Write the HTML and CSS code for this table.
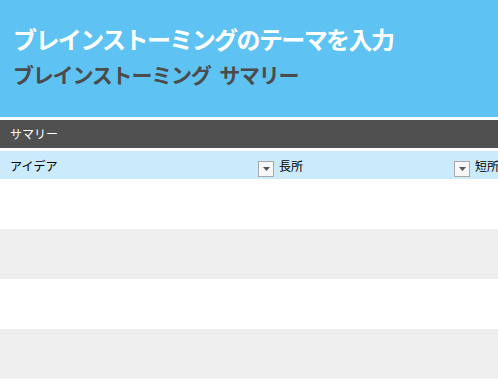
FILE: index.html
```html
<!DOCTYPE html>
<html lang="ja">
<head>
<meta charset="utf-8">
<title>ブレインストーミング サマリー</title>
<link rel="stylesheet" href="styles.css">
</head>
<body>
<header class="banner">
  <h1 class="title">ブレインストーミングのテーマを入力</h1>
  <h2 class="subtitle">ブレインストーミング サマリー</h2>
</header>
<div class="section-bar">サマリー</div>
<div class="table">
  <div class="thead">
    <div class="th"><span>アイデア</span><span class="dd"><svg width="7" height="4" viewBox="0 0 7 4"><path d="M0 0H7L3.5 4Z" fill="#555"/></svg></span></div>
    <div class="th"><span>長所</span><span class="dd"><svg width="7" height="4" viewBox="0 0 7 4"><path d="M0 0H7L3.5 4Z" fill="#555"/></svg></span></div>
    <div class="th"><span>短所</span></div>
  </div>
  <div class="row"></div>
  <div class="row alt"></div>
  <div class="row"></div>
  <div class="row alt"></div>
</div>
</body>
</html>
```
FILE: styles.css
```css
html, body {
  margin: 0;
  padding: 0;
  background: #ffffff;
}
body {
  width: 498px;
  height: 382px;
  overflow: hidden;
  font-family: "Noto Sans CJK JP", "Noto Sans", sans-serif;
}
.banner {
  background: #5ec3f3;
  height: 117px;
  padding: 22px 0 0 13px;
  box-sizing: border-box;
}
.title {
  margin: 0;
  color: #ffffff;
  font-size: 24px;
  font-weight: bold;
  letter-spacing: -1.6px;
  line-height: 34px;
  white-space: nowrap;
}
.subtitle {
  margin: 3px 0 0;
  color: #4b4b4b;
  font-size: 21px;
  font-weight: bold;
  letter-spacing: -1.2px;
  word-spacing: 5px;
  line-height: 30px;
  white-space: pre;
}
.section-bar {
  margin-top: 3px;
  height: 28px;
  background: #505050;
  color: #ffffff;
  font-size: 12px;
  line-height: 28px;
  padding-left: 10px;
}
.table {
  margin-top: 3px;
}
.thead {
  display: grid;
  grid-template-columns: 276px 196px 1fr;
  height: 28px;
  background: #cbeafb;
}
.th {
  display: flex;
  align-items: center;
  justify-content: space-between;
  padding: 0 2px 0 3px;
  font-size: 12px;
  color: #000000;
  white-space: nowrap;
}
.th:first-child {
  padding-left: 10px;
}
.dd {
  width: 16px;
  height: 16px;
  box-sizing: border-box;
  border: 1px solid #a9a9a9;
  background: #f7f7f7;
  display: flex;
  align-items: center;
  justify-content: center;
  margin-top: 7px;
}
.row {
  height: 50px;
  background: #ffffff;
}
.row.alt {
  background: #efefef;
}
```
